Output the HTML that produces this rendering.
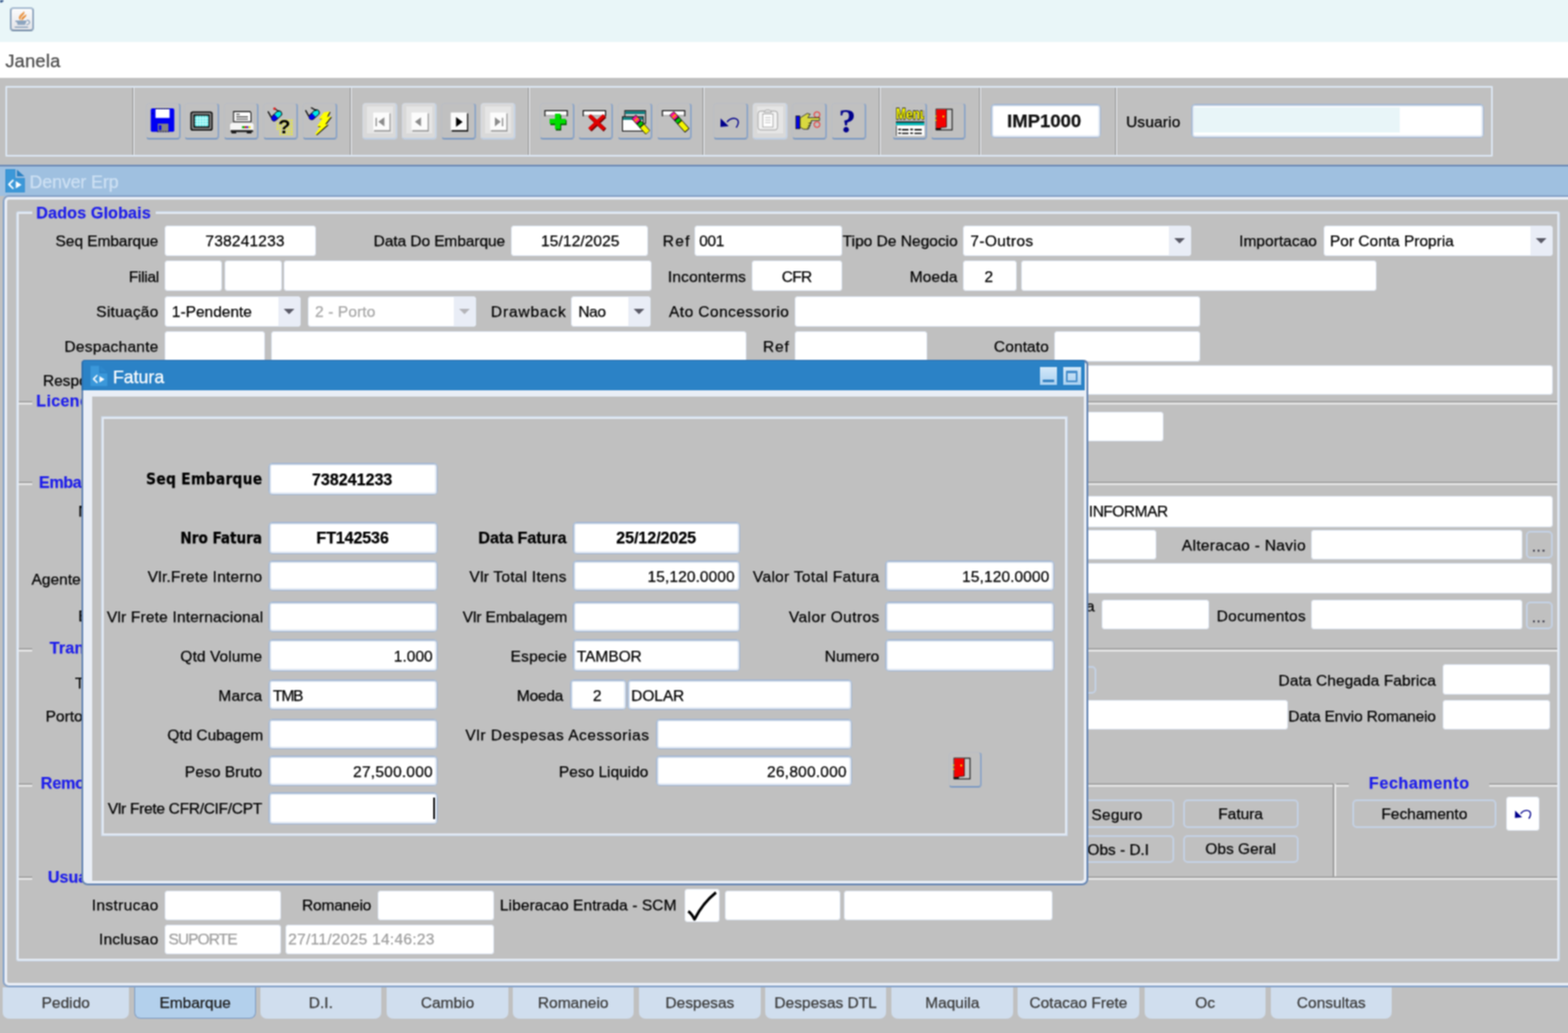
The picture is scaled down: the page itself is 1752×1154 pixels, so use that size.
<!DOCTYPE html>
<html lang="pt-BR"><head><meta charset="utf-8"><title>Denver Erp - Fatura</title>
<style>
*{box-sizing:border-box;margin:0;padding:0}
html{background:#c0c0c0}
body{position:relative;width:1752px;height:1154px;background:#c0c0c0;font-family:"Liberation Sans",sans-serif;font-size:17.3px;color:#000}
#c{left:0;top:0;width:1752px;height:1154px;overflow:hidden}
#b{left:-8px;top:-8px;width:1768px;height:1170px;background:#c0c0c0;filter:url(#soft)}
#w{left:8px;top:8px;width:1752px;height:1154px}
.l,.lb,.t,.tt{-webkit-text-stroke:.25px currentColor}
body div,body span,body i,body svg{position:absolute}
.l{white-space:nowrap;height:22px;line-height:22px}
.lb{white-space:nowrap;height:22px;line-height:22px;font-weight:bold;font-size:18px}
.t{white-space:nowrap;height:22px;line-height:22px;font-weight:bold;font-size:18px;color:#1f1fea}
.tt{white-space:nowrap;height:22px;line-height:22px}
.f{background:#fff;border:1px solid #e1e9f5;border-radius:3px;white-space:nowrap;overflow:hidden}
.ff{background:#fff;border:1px solid #a0b5d2;border-radius:4px;box-shadow:inset 0 1px 0 0 #b6c7dd,inset 1px 0 0 0 #c3d2e5,inset 0 0 0 2px #e3eaf4}
.b{font-weight:bold}
.dis{color:#a8a8a8}
.g{color:#a0a0a0}
.dd{right:0;top:0;bottom:0;width:24px;background:#e9edf6}
.dd i{left:6px;top:13px;width:0;height:0;border-left:6.5px solid transparent;border-right:6.5px solid transparent;border-top:6.5px solid #5a5a66}
.dis .dd i{border-top-color:#b4b4b8}
.hl{background:linear-gradient(#9b9b9b 0 1px,#b8b8b8 1px 2px,#e8e8e8 2px 3px,#e2e2e2 3px 4px)}
.vl{background:linear-gradient(90deg,#9b9b9b 0 1px,#a4a4a4 1px 2px,#e8e8e8 2px 3px,#e4e4e4 3px 4px)}
.btn{border:2px solid #c4d1e4;border-radius:5px;text-align:center;white-space:nowrap}
.tab{top:1103px;height:35px;background:#d0deee;border-radius:0 0 7px 7px}
.tab.sel{background:#b3d0ec;border:solid #7d9cc4;border-width:0 1.5px 1.5px 1.5px;height:35px}
.tb{top:115px;width:39px;height:41px;border-radius:4px;border:solid;border-width:1px 2px 2px 1px;border-color:#b9bdc4 #8fa6c6 #7f9bc2 #b9bdc4}
.tb.off{background:#d9d9d9;border-color:#d3dae4 #c6d3e4 #c0cfe3 #d3dae4}
.tb.off::before{content:"";position:absolute;left:4px;top:3px;right:3px;bottom:5px;background:#e5e5e5}
.tb svg{left:-1px;top:-1px;width:38px;height:40px;overflow:visible}
.sep{top:98px;height:75px;width:2px;border-left:1px solid #8e8e8e;border-right:1px solid #eef2f8}
.dj{font-family:"DejaVu Sans Condensed","DejaVu Sans",sans-serif}

</style></head>
<body>
<svg width="0" height="0" style="position:absolute"><filter id="soft" x="0" y="0" width="100%" height="100%" filterUnits="objectBoundingBox" color-interpolation-filters="sRGB"><feConvolveMatrix order="3" kernelMatrix="1 2 1 2 4 2 1 2 1" divisor="16" bias="0" edgeMode="duplicate" preserveAlpha="true"/></filter></svg>
<div id="c"><div id="b"><div id="w">
<div style="left:-8px;top:-8px;width:1768px;height:55px;background:#e9f6f8"></div>
<div style="left:0;top:0;width:4px;height:3px;background:#4a6a98;border-radius:0 0 4px 0"></div>
<div style="left:11px;top:7.500px;width:27px;height:27px;border:2px solid;border-color:#a9bdd2 #93a9c1 #7d94ad #93a9c1;border-radius:4px;background:linear-gradient(#fcfcfc,#e2e3e7)">
<svg viewBox="285 195 705 710" style="left:-2px;top:-2px;width:27px;height:27px"><path d="M610 590c-110-60-60-150 20-210 40-30 60-50 66-76 40 50 10 100-36 140-50 40-70 90-50 146z" fill="#ea9a4e"/><path d="M650 590c-50-50-10-100 40-130 30-20 60-40 70-60 20 50-10 80-50 110-30 24-50 50-60 80z" fill="#e88a30"/><path d="M460 610h300M505 655h235M520 698h200M440 782h365" fill="none" stroke="#7f9ab8" stroke-width="36" stroke-linecap="round"/><path d="M790 575c70 10 90 60 60 100-16 20-40 30-70 34" fill="none" stroke="#7f9ab8" stroke-width="30" stroke-linecap="round"/></svg></div>
<div style="left:-8px;top:47px;width:1768px;height:40px;background:#fff"></div>
<div class="tt" style="left:5.9px;top:57px;letter-spacing:0.22px;font-size:20.5px;color:#4a4a4a">Janela</div>
<div style="left:5.5px;top:95.5px;width:1662.5px;height:79.5px;border:2px solid #dbe5f1;border-radius:1px"></div>
<div style="left:-8px;top:184px;width:1768px;height:35px;background:#9fc0e0;border-top:2px solid #6f8cb6"></div>
<svg viewBox="165 225 570 690" style="left:6.3px;top:188.6px;width:21.7px;height:26.3px"><path d="M165 245q0-20 20-20H460V480H735V895q0 20-20 20H185q-20 0-20-20z" fill="#2f86c8"/><path d="M178 238H447V493H722V902H178z" fill="#3c98d8"/><path d="M505 235L725 435H505z" fill="#2b80c2"/><path d="M400 540l-130 130 130 130" fill="none" stroke="#fff" stroke-width="52" stroke-linejoin="round" opacity=".92"/><path d="M330 600l-50 70 50 70" fill="none" stroke="#fff" stroke-width="40" opacity=".55"/><path d="M470 575L640 682 470 790z" fill="#fff"/></svg>
<div class="tt" style="left:33.1px;top:192px;letter-spacing:-0.08px;font-size:19.8px;color:#cde0f3">Denver Erp</div>
<div style="left:3px;top:218px;width:1767px;height:885px;border:2px solid #86a2c8;border-radius:7px"><div style="left:0;top:0;right:0;bottom:0;border:3px solid #e8edf5;border-radius:5px"></div></div>
<div style="left:18px;top:236px;width:1725px;height:838px;border:1px solid #cbd9ea;border-radius:2px"><div style="left:0;top:0;right:0;bottom:0;border:2px solid #e2e9f3;border-radius:1px"></div></div>
<div style="left:36px;top:232px;width:138px;height:12px;background:#c0c0c0"></div>
<div class="t" style="left:40.6px;top:227px;letter-spacing:0.15px;font-size:18px;">Dados Globais</div>
<div class="l" style="left:62.1px;top:258px;letter-spacing:-0.05px;">Seq Embarque</div>
<div class="f" style="left:184px;top:252px;width:169px;height:34px;line-height:32px;text-align:left;padding-left:6px;"></div>
<div class="l" style="left:229.6px;top:258px;letter-spacing:0.22px;">738241233</div>
<div class="l" style="left:417.6px;top:258px;letter-spacing:-0.08px;">Data Do Embarque</div>
<div class="f" style="left:571px;top:252px;width:153px;height:34px;line-height:32px;text-align:left;padding-left:6px;"></div>
<div class="l" style="left:604.6px;top:258px;letter-spacing:0.11px;">15/12/2025</div>
<div class="l" style="left:740.6px;top:258px;letter-spacing:1.45px;">Ref</div>
<div class="f" style="left:776px;top:252px;width:165px;height:34px;line-height:32px;text-align:left;padding-left:6px;"></div>
<div class="l" style="left:781.3px;top:258px;letter-spacing:-0.37px;">001</div>
<div class="l" style="left:941.6px;top:258px;letter-spacing:0.03px;">Tipo De Negocio</div>
<div class="f cb" style="left:1076px;top:252px;width:255px;height:34px;"><span class="dd"><i></i></span></div>
<div class="l" style="left:1084.3px;top:258px;letter-spacing:0.41px;">7-Outros</div>
<div class="l" style="left:1384.6px;top:258px;letter-spacing:0.04px;">Importacao</div>
<div class="f cb" style="left:1479px;top:252px;width:256px;height:34px;"><span class="dd"><i></i></span></div>
<div class="l" style="left:1486.1px;top:258px;">Por Conta Propria</div>
<div class="l" style="left:144.1px;top:298px;letter-spacing:-0.35px;">Filial</div>
<div class="f" style="left:184px;top:291px;width:64px;height:34px;line-height:32px;text-align:left;padding-left:6px;"></div>
<div class="f" style="left:251px;top:291px;width:64px;height:34px;line-height:32px;text-align:left;padding-left:6px;"></div>
<div class="f" style="left:317px;top:291px;width:411px;height:34px;line-height:32px;text-align:left;padding-left:6px;"></div>
<div class="l" style="left:746.3px;top:298px;letter-spacing:0.18px;">Inconterms</div>
<div class="f" style="left:840px;top:291px;width:101px;height:34px;line-height:32px;text-align:left;padding-left:6px;"></div>
<div class="l" style="left:873.6px;top:298px;letter-spacing:-0.87px;">CFR</div>
<div class="l" style="left:1016.6px;top:298px;letter-spacing:0.11px;">Moeda</div>
<div class="f" style="left:1076px;top:291px;width:60px;height:34px;line-height:32px;text-align:left;padding-left:6px;"></div>
<div class="l" style="left:1100.1px;top:298px;">2</div>
<div class="f" style="left:1141px;top:291px;width:397px;height:34px;line-height:32px;text-align:left;padding-left:6px;"></div>
<div class="l" style="left:107.6px;top:337px;letter-spacing:0.29px;">Situação</div>
<div class="f cb" style="left:184px;top:331px;width:152px;height:34px;"><span class="dd"><i></i></span></div>
<div class="l" style="left:192.1px;top:337px;">1-Pendente</div>
<div class="f cb dis" style="left:344px;top:331px;width:188px;height:34px;"><span class="dd"><i></i></span></div>
<div class="l dis" style="left:352.1px;top:337px;letter-spacing:0.13px;">2 - Porto</div>
<div class="l" style="left:548.6px;top:337px;letter-spacing:0.95px;">Drawback</div>
<div class="f cb" style="left:638px;top:331px;width:89px;height:34px;"><span class="dd"><i></i></span></div>
<div class="l" style="left:646.3px;top:337px;letter-spacing:-0.45px;">Nao</div>
<div class="l" style="left:747.6px;top:337px;letter-spacing:0.50px;">Ato Concessorio</div>
<div class="f" style="left:888px;top:331px;width:453px;height:34px;line-height:32px;text-align:left;padding-left:6px;"></div>
<div class="l" style="left:72.1px;top:376px;letter-spacing:0.30px;">Despachante</div>
<div class="f" style="left:184px;top:370px;width:112px;height:34px;line-height:32px;text-align:left;padding-left:6px;"></div>
<div class="f" style="left:303px;top:370px;width:531px;height:34px;line-height:32px;text-align:left;padding-left:6px;"></div>
<div class="l" style="left:852.6px;top:376px;letter-spacing:0.95px;">Ref</div>
<div class="f" style="left:888px;top:370px;width:148px;height:34px;line-height:32px;text-align:left;padding-left:6px;"></div>
<div class="l" style="left:1110.6px;top:376px;letter-spacing:0.13px;">Contato</div>
<div class="f" style="left:1178px;top:370px;width:163px;height:34px;line-height:32px;text-align:left;padding-left:6px;"></div>
<div class="l" style="left:48px;top:414px;">Responsavel</div>
<div class="f" style="left:184px;top:408px;width:1551px;height:33px;line-height:31px;text-align:left;padding-left:6px;"></div>
<div class="hl" style="left:21px;top:448px;width:1719px;height:4px;"></div>
<div style="left:36px;top:442px;width:140px;height:12px;background:#c0c0c0"></div>
<div class="t" style="left:40.6px;top:437px;letter-spacing:0.31px;font-size:18px;">Licenciamento</div>
<div class="f" style="left:1100px;top:460px;width:200px;height:33px;line-height:31px;text-align:left;padding-left:6px;"></div>
<div class="hl" style="left:21px;top:538px;width:1719px;height:4px;"></div>
<div style="left:36px;top:533px;width:98px;height:12px;background:#c0c0c0"></div>
<div class="t" style="left:43.6px;top:528px;letter-spacing:-0.46px;font-size:18px;">Embarque</div>
<div class="l" style="left:87.5px;top:560px;">Navio</div>
<div class="f" style="left:184px;top:554px;width:1551px;height:35px;line-height:33px;text-align:left;padding-left:6px;"></div>
<div class="l" style="left:1216.6px;top:560px;letter-spacing:-0.52px;">INFORMAR</div>
<div class="f" style="left:1100px;top:592px;width:192px;height:33px;line-height:31px;text-align:left;padding-left:6px;"></div>
<div class="l" style="left:1320.6px;top:598px;letter-spacing:0.36px;">Alteracao - Navio</div>
<div class="f" style="left:1465px;top:592px;width:236px;height:33px;line-height:31px;text-align:left;padding-left:6px;"></div>
<div class="btn" style="left:1704.5px;top:592.5px;width:30px;height:31px;"></div>
<div class="l" style="left:1704.500px;width:30px;top:599px;text-align:center;color:#334;letter-spacing:.6px">...</div>
<div class="l" style="left:35.3px;top:636px;">Agente</div>
<div class="f" style="left:184px;top:629px;width:1550px;height:34px;line-height:32px;text-align:left;padding-left:6px;"></div>
<div class="l" style="left:87.4px;top:677px;">Embarcacao</div>
<div class="l" style="right:529px;top:666px;">Data</div>
<div class="f" style="left:1231px;top:670px;width:120px;height:33px;line-height:31px;text-align:left;padding-left:6px;"></div>
<div class="l" style="left:1359.6px;top:677px;letter-spacing:0.25px;">Documentos</div>
<div class="f" style="left:1465px;top:670px;width:236px;height:33px;line-height:31px;text-align:left;padding-left:6px;"></div>
<div class="btn" style="left:1704.5px;top:671.5px;width:30px;height:31px;"></div>
<div class="l" style="left:1704.500px;width:30px;top:678px;text-align:center;color:#334;letter-spacing:.6px">...</div>
<div class="hl" style="left:21px;top:724px;width:1719px;height:4px;"></div>
<div style="left:36px;top:718px;width:120px;height:12px;background:#c0c0c0"></div>
<div class="t" style="left:55.6px;top:713px;letter-spacing:0.20px;font-size:18px;">Transporte</div>
<div class="l" style="left:83.8px;top:752px;">Tipo</div>
<div class="btn" style="left:1100px;top:743.5px;width:125px;height:31px;"></div>
<div class="l" style="left:1428.6px;top:749px;letter-spacing:0.10px;">Data Chegada Fabrica</div>
<div class="f" style="left:1612px;top:742px;width:120px;height:34px;line-height:32px;text-align:left;padding-left:6px;"></div>
<div class="l" style="left:51px;top:789px;">Porto</div>
<div class="f" style="left:184px;top:782px;width:1255px;height:33px;line-height:31px;text-align:left;padding-left:6px;"></div>
<div class="l" style="left:1439.6px;top:789px;letter-spacing:-0.18px;">Data Envio Romaneio</div>
<div class="f" style="left:1612px;top:782px;width:120px;height:33px;line-height:31px;text-align:left;padding-left:6px;"></div>
<div class="hl" style="left:21px;top:875px;width:1469px;height:4px;"></div>
<div style="left:36px;top:869px;width:95px;height:12px;background:#c0c0c0"></div>
<div class="t" style="left:45.6px;top:864px;letter-spacing:-0.21px;font-size:18px;">Remocao</div>
<div class="vl" style="left:1489px;top:876px;width:4px;height:105px;"></div>
<div class="hl" style="left:1493px;top:875px;width:247px;height:4px;"></div>
<div style="left:1506.5px;top:869px;width:157.5px;height:12px;background:#c0c0c0"></div>
<div class="t" style="left:1529.6px;top:864px;letter-spacing:0.64px;font-size:18px;">Fechamento</div>
<div class="btn" style="left:1184px;top:893px;width:128px;height:31.5px;"></div>
<div class="l" style="left:1219.6px;top:898.5px;letter-spacing:0.21px;">Seguro</div>
<div class="btn" style="left:1322px;top:893px;width:128.5px;height:31.5px;"></div>
<div class="l" style="left:1322px;width:128.5px;top:897.75px;text-align:center">Fatura</div>
<div class="btn" style="left:1184px;top:932.5px;width:128px;height:31.5px;"></div>
<div class="l" style="left:1215.1px;top:938px;letter-spacing:-0.04px;">Obs - D.I</div>
<div class="btn" style="left:1322px;top:932.5px;width:128.5px;height:31.5px;"></div>
<div class="l" style="left:1322px;width:128.5px;top:937.25px;text-align:center">Obs Geral</div>
<div class="btn" style="left:1511px;top:893px;width:161px;height:31.5px;"></div>
<div class="l" style="left:1511px;width:161px;top:897.75px;text-align:center">Fechamento</div>
<div style="left:1683px;top:890px;width:37px;height:38px;background:#fff;border-radius:3px;border:1px solid #e6edf7"><svg viewBox="100 170 190 130" style="left:7px;top:11px;width:22px;height:15px"><path d="M116 200l68 66-70 6z" fill="#00008c"/><path d="M170 232c30-44 100-44 96 6-2 16-8 28-18 40" fill="none" stroke="#00008c" stroke-width="12"/></svg></div>
<div class="hl" style="left:21px;top:979px;width:1719px;height:4px;"></div>
<div style="left:36px;top:974px;width:90px;height:12px;background:#c0c0c0"></div>
<div class="t" style="left:53.6px;top:969px;letter-spacing:-0.04px;font-size:18px;">Usuario</div>
<div class="l" style="left:102.6px;top:1000px;letter-spacing:0.40px;">Instrucao</div>
<div class="f" style="left:184px;top:995px;width:130px;height:33px;line-height:31px;text-align:left;padding-left:6px;"></div>
<div class="l" style="left:337.6px;top:1000px;letter-spacing:-0.21px;">Romaneio</div>
<div class="f" style="left:422px;top:995px;width:130px;height:33px;line-height:31px;text-align:left;padding-left:6px;"></div>
<div class="l" style="left:558.6px;top:1000px;letter-spacing:0.10px;">Liberacao Entrada - SCM</div>
<div style="left:765px;top:993px;width:39px;height:37px;background:#fff;border-radius:3px;border:1px solid #e6edf7"><svg viewBox="0 0 39 37" style="left:0;top:0;width:39px;height:37px"><path d="M3 24c3 2 5 5 7 9 6-12 14-22 24-30" fill="none" stroke="#000" stroke-width="3" stroke-linejoin="round"/></svg></div>
<div class="f" style="left:810px;top:995px;width:129px;height:33px;line-height:31px;text-align:left;padding-left:6px;"></div>
<div class="f" style="left:943px;top:995px;width:233px;height:33px;line-height:31px;text-align:left;padding-left:6px;"></div>
<div class="l" style="left:110.6px;top:1038px;letter-spacing:0.27px;">Inclusao</div>
<div class="f" style="left:184px;top:1033px;width:130px;height:33px;line-height:31px;text-align:left;padding-left:6px;"></div>
<div class="l g" style="left:188.3px;top:1038px;letter-spacing:-1.02px;">SUPORTE</div>
<div class="f" style="left:319px;top:1033px;width:233px;height:33px;line-height:31px;text-align:left;padding-left:6px;"></div>
<div class="l g" style="left:322.1px;top:1038px;letter-spacing:0.33px;">27/11/2025 14:46:23</div>
<div class="sep" style="left:148px"></div>
<div class="sep" style="left:391px"></div>
<div class="sep" style="left:590px"></div>
<div class="sep" style="left:785px"></div>
<div class="sep" style="left:982px"></div>
<div class="sep" style="left:1094px"></div>
<div class="sep" style="left:1246px"></div>
<div class="tb" style="left:163px"><svg viewBox="0 0 38 40"><g transform="translate(-7.00 -9.00) scale(0.13128)">
<rect x="95" y="115" width="200" height="200" rx="14" fill="#0000f5"/>
<rect x="135" y="122" width="120" height="74" fill="#fff"/>
<path d="M138 118h114" stroke="#111" stroke-width="7" stroke-dasharray="14 8"/>
<rect x="155" y="245" width="90" height="68" fill="#858585"/>
<rect x="165" y="258" width="20" height="42" fill="#0000f5"/>
<path d="M150 312h100" stroke="#111" stroke-width="7" stroke-dasharray="14 8"/>
<rect x="106" y="152" width="10" height="12" fill="#00008a"/>
</g></svg></div>
<div class="tb" style="left:206px"><svg viewBox="0 0 38 40"><g transform="translate(-50.00 -9.00) scale(0.13128)">
<rect x="432" y="140" width="190" height="165" rx="20" fill="#111"/>
<rect x="444" y="152" width="166" height="141" rx="12" fill="#8a8a8a"/>
<rect x="458" y="166" width="138" height="113" rx="4" fill="#111"/>
<rect x="470" y="178" width="116" height="90" fill="#5fe6e6"/>
<path d="M470 200h116M470 223h116M470 246h116M493 178v90M516 178v90M540 178v90M563 178v90" stroke="#d8ffff" stroke-width="7"/>
</g></svg></div>
<div class="tb" style="left:250px"><svg viewBox="0 0 38 40"><g transform="translate(-94.00 -9.00) scale(0.13128)">
<path d="M800 142h140l8 12v75H800z" fill="#fff" stroke="#111" stroke-width="8"/>
<path d="M822 166h30M822 186h100M822 206h100" stroke="#111" stroke-width="7"/>
<rect x="770" y="238" width="200" height="66" rx="6" fill="#f6f6f6"/>
<path d="M770 248c0-8 6-12 14-12M970 248c0-8-6-12-14-12" stroke="#999" stroke-width="5" fill="none"/>
<rect x="775" y="300" width="190" height="16" fill="#111"/>
<rect x="782" y="314" width="40" height="14" fill="#111"/><rect x="912" y="314" width="40" height="14" fill="#111"/>
<rect x="872" y="266" width="22" height="18" fill="#00b000"/><rect x="894" y="266" width="16" height="18" fill="#e00000"/><rect x="910" y="266" width="16" height="18" fill="#2020e0"/><rect x="926" y="266" width="18" height="18" fill="#e8e000"/>
</g></svg></div>
<div class="tb" style="left:294px"><svg viewBox="0 0 38 40"><g transform="translate(-139.00 -9.00) scale(0.13128)"><g transform="translate(1172 180) rotate(-43)"><rect x="-52" y="-27" width="108" height="54" rx="26" fill="#111"/><path d="M-26 -21h28v42h-28a21 21 0 0 1 0-42z" fill="#0000f0" transform="translate(-3 0)"/><path d="M-2 -21h34l16 9v24l-16 9h-34z" fill="#00e8e8"/></g><path d="M1102 144l24 44" stroke="#111" stroke-width="11" stroke-linecap="round"/><path d="M1160 118l34 24" stroke="#111" stroke-width="9"/><circle cx="1156" cy="118" r="11" fill="#e02020"/>
<defs><pattern id="yd" x="1170" y="205" width="24" height="24" patternUnits="userSpaceOnUse"><rect x="3" y="3" width="16" height="16" rx="6" fill="#ecec30"/></pattern></defs>
<path d="M1170 232h30v-27h115v142h-120v-44h-25z" fill="url(#yd)"/>
<text x="1238" y="327" font-family="Liberation Sans,sans-serif" font-weight="bold" font-size="172" text-anchor="middle" fill="#000">?</text>
</g></svg></div>
<div class="tb" style="left:338px"><svg viewBox="0 0 38 40"><g transform="translate(-182.00 -9.00) scale(0.13128)"><g transform="translate(1484 170) rotate(-43)"><rect x="-52" y="-27" width="108" height="54" rx="26" fill="#111"/><path d="M-26 -21h28v42h-28a21 21 0 0 1 0-42z" fill="#0000f0" transform="translate(-3 0)"/><path d="M-2 -21h34l16 9v24l-16 9h-34z" fill="#00e8e8"/></g><path d="M1414 134l24 44" stroke="#111" stroke-width="11" stroke-linecap="round"/><path d="M1462 110l40 22" stroke="#111" stroke-width="10" stroke-linecap="round"/>
<path d="M1568 148L1619 140 1596 187 1631 183 1580 250 1604 250 1502 340 1494 332 1541 269 1510 269 1553 203 1525 203Z" fill="#111" transform="translate(7 5)"/>
<path d="M1568 148L1619 140 1596 187 1631 183 1580 250 1604 250 1502 340 1494 332 1541 269 1510 269 1553 203 1525 203Z" fill="#ffff00"/>
</g></svg></div>
<div class="tb off" style="left:405px"><svg viewBox="0 0 38 40"><g transform="translate(-7.00 -9.00) scale(0.13128)"><rect x="153" y="158" width="140" height="155" fill="#9a9a9a"/><rect x="145" y="150" width="138" height="150" fill="#fcfcfc"/><rect x="165" y="195" width="11" height="72" fill="#8c8c8c"/><path d="M240 190v78l-52-39z" fill="#8c8c8c"/></g></svg></div>
<div class="tb off" style="left:449px"><svg viewBox="0 0 38 40"><g transform="translate(-51.00 -9.00) scale(0.13128)"><rect x="478" y="158" width="140" height="155" fill="#9a9a9a"/><rect x="470" y="150" width="138" height="150" fill="#fcfcfc"/><path d="M552 190v78l-52-39z" fill="#8c8c8c"/></g></svg></div>
<div class="tb" style="left:493px"><svg viewBox="0 0 38 40"><g transform="translate(-95.00 -9.00) scale(0.13128)"><rect x="813" y="158" width="140" height="155" fill="#111"/><rect x="805" y="150" width="138" height="150" fill="#fcfcfc"/><path d="M850 188v84l56-42z" fill="#000"/></g></svg></div>
<div class="tb off" style="left:537px"><svg viewBox="0 0 38 40"><g transform="translate(-139.00 -9.00) scale(0.13128)"><rect x="1148" y="158" width="140" height="155" fill="#9a9a9a"/><rect x="1140" y="150" width="138" height="150" fill="#fcfcfc"/><path d="M1180 190v78l50-39z" fill="#8c8c8c"/><rect x="1240" y="195" width="11" height="72" fill="#8c8c8c"/></g></svg></div>
<div class="tb" style="left:603px"><svg viewBox="0 0 38 40"><g transform="translate(-7.00 -9.00) scale(0.13128)"><rect x="98" y="134" width="190" height="44" fill="#fff" stroke="#111" stroke-width="9"/><rect x="102" y="176" width="182" height="8" fill="#c0c0c0"/>
<path d="M184 164h46v44h46v42h-46v46h-46v-46h-46v-42h46z" fill="#005000" transform="translate(7 7)"/>
<path d="M184 160h46v44h46v42h-46v46h-46v-46h-46v-42h46z" fill="#00dc00"/>
</g></svg></div>
<div class="tb" style="left:646px"><svg viewBox="0 0 38 40"><g transform="translate(-50.00 -9.00) scale(0.13128)"><rect x="424" y="134" width="190" height="44" fill="#fff" stroke="#111" stroke-width="9"/><rect x="428" y="176" width="182" height="8" fill="#c0c0c0"/>
<path d="M478 176l126 118M604 176l-126 118" stroke="#700000" stroke-width="34" transform="translate(5 5)"/>
<path d="M476 174l126 118M602 174l-126 118" stroke="#e00000" stroke-width="30"/>
</g></svg></div>
<div class="tb" style="left:690px"><svg viewBox="0 0 38 40"><g transform="translate(-94.00 -9.00) scale(0.13128)">
<rect x="778" y="134" width="176" height="110" fill="#c8c8c8" stroke="#111" stroke-width="8"/><rect x="782" y="140" width="168" height="22" fill="#007878"/>
<rect x="758" y="186" width="176" height="122" fill="#fff" stroke="#111" stroke-width="8"/><rect x="762" y="192" width="168" height="20" fill="#007878"/>
<g transform="translate(858 190) rotate(48)"><rect x="-6" y="-26" width="181" height="52" rx="6" fill="#111"/><rect x="-2" y="-21" width="56" height="42" fill="#ff10a0"/><rect x="20" y="-21" width="16" height="42" fill="#ff9000"/><rect x="54" y="-21" width="10" height="42" fill="#111"/><rect x="64" y="-21" width="30" height="42" fill="#00c800"/><rect x="94" y="-21" width="8" height="42" fill="#111"/><rect x="102" y="-21" width="70" height="42" fill="#f4f400"/></g></g></svg></div>
<div class="tb" style="left:734px"><svg viewBox="0 0 38 40"><g transform="translate(-138.00 -9.00) scale(0.13128)"><rect x="1098" y="134" width="190" height="44" fill="#fff" stroke="#111" stroke-width="9"/><rect x="1102" y="176" width="182" height="8" fill="#c0c0c0"/><g transform="translate(1180 160) rotate(48)"><rect x="-6" y="-26" width="200" height="52" rx="6" fill="#111"/><rect x="-2" y="-21" width="56" height="42" fill="#ff10a0"/><rect x="20" y="-21" width="16" height="42" fill="#ff9000"/><rect x="54" y="-21" width="10" height="42" fill="#111"/><rect x="64" y="-21" width="30" height="42" fill="#00c800"/><rect x="94" y="-21" width="8" height="42" fill="#111"/><rect x="102" y="-21" width="85" height="42" fill="#f4f400"/></g></g></svg></div>
<div class="tb" style="left:797px"><svg viewBox="0 0 38 40"><g transform="translate(-7.00 -9.00) scale(0.13128)">
<path d="M116 200l68 66-70 6z" fill="#00008c"/>
<path d="M170 232c30-44 100-44 96 6-2 16-8 28-18 40" fill="none" stroke="#00008c" stroke-width="11"/>
</g></svg></div>
<div class="tb off" style="left:841px"><svg viewBox="0 0 38 40"><g transform="translate(-51.00 -9.00) scale(0.13128)">
<rect x="434" y="138" width="166" height="160" rx="22" fill="#f2f2f2" stroke="#9c9c9c" stroke-width="7"/>
<path d="M486 150c0-30 62-30 62 0z" fill="#e6e6e6" stroke="#9c9c9c" stroke-width="6"/>
<rect x="474" y="162" width="88" height="112" fill="#fff" stroke="#9c9c9c" stroke-width="6"/>
<path d="M494 192h48M494 214h48M494 236h48" stroke="#b0b0b0" stroke-width="6"/>
</g></svg></div>
<div class="tb" style="left:885px"><svg viewBox="0 0 38 40"><g transform="translate(-95.00 -9.00) scale(0.13128)">
<circle cx="936" cy="168" r="24" fill="none" stroke="#f03030" stroke-width="8"/><circle cx="936" cy="252" r="24" fill="none" stroke="#f03030" stroke-width="8"/>
<rect x="756" y="180" width="34" height="108" fill="#0000f0" stroke="#111" stroke-width="6"/>
<path d="M792 196l60-38 26 6-20 30h100v24h-70v16h-8v20h-8v20h-10v18h-40l-30-16z" fill="#d8d840" stroke="#222" stroke-width="6" stroke-linejoin="round"/>
<path d="M862 240h28M858 262h24M852 282h22" stroke="#222" stroke-width="5"/>
</g></svg></div>
<div class="tb" style="left:929px"><svg viewBox="0 0 38 40"><g transform="translate(-139.00 -9.00) scale(0.13128)">
<text x="1193" y="318" font-family="Liberation Serif,serif" font-weight="bold" font-size="295" text-anchor="middle" fill="#00008c">?</text>
</g></svg></div>
<div class="tb" style="left:997px"><svg viewBox="0 0 38 40"><g transform="translate(-17.00 -9.00) scale(0.13128)">
<defs><clipPath id="mc"><rect x="150" y="90" width="252" height="260"/></clipPath></defs>
<g clip-path="url(#mc)">
<text transform="translate(160 204) scale(0.8 1)" font-family="Liberation Sans,sans-serif" font-weight="bold" font-size="128" fill="#f4f400" stroke="#111" stroke-width="10" paint-order="stroke">Menu</text>
<rect x="160" y="226" width="250" height="10" fill="#111"/>
<rect x="160" y="236" width="250" height="22" fill="#00b8b8"/>
<rect x="160" y="262" width="250" height="86" fill="#fff"/>
<rect x="160" y="262" width="8" height="86" fill="#555"/>
<path d="M180 294h24M212 296h56M282 294h24M318 296h62M180 326h24M212 328h56M282 326h24M318 328h62" stroke="#111" stroke-width="12"/>
</g>
</g></svg></div>
<div class="tb" style="left:1040px"><svg viewBox="0 0 38 40"><g transform="translate(-60.00 -9.00) scale(0.13128)">
<rect x="503" y="122" width="136" height="176" fill="#c8c8c8" stroke="#111" stroke-width="8"/>
<path d="M505 124h86v150l-48 4-6 16h-32z" fill="#f40000"/>
<path d="M591 124v150l-48 4-6 16" fill="none" stroke="#111" stroke-width="5"/>
<path d="M500 290h44" stroke="#111" stroke-width="14"/>
<rect x="556" y="176" width="16" height="16" fill="#f4c000"/>
<path d="M492 182h14M492 216h14" stroke="#f4e000" stroke-width="8"/>
</g></svg></div>
<div class="ff" style="left:1107px;top:116px;width:123px;height:38px;line-height:36px;text-align:left;padding-left:6px;"></div>
<div class="l b" style="left:1125.3px;top:124px;letter-spacing:-0.06px;font-size:20.8px;color:#111">IMP1000</div>
<div class="l" style="left:1258.2px;top:125px;letter-spacing:0.19px;">Usuario</div>
<div class="ff" style="left:1331px;top:116px;width:327px;height:38px;line-height:36px;text-align:left;padding-left:6px;"></div>
<div style="left:1334px;top:120px;width:230px;height:28px;background:#e8f5f8"></div>
<div style="left:91px;top:402px;width:1125px;height:587px;background:#6585b2;border-radius:4px 5px 7px 7px;overflow:hidden"><div style="left:2px;top:3px;right:2px;bottom:2.500px;background:#e9eef6;border-radius:0 3px 5px 5px"></div><div style="left:0;top:0;right:4px;height:34px;background:#2b82c6;border:solid #2f70ae;border-width:1.500px 0 0 2px;border-radius:4px 3px 0 0"></div><div style="left:12px;top:41px;right:5.500px;bottom:5.500px;background:#c0c0c0;border-radius:0 0 3px 0"></div></div>
<svg viewBox="165 225 570 690" style="left:101px;top:408px;width:19px;height:24px"><path d="M165 245q0-20 20-20H460V480H735V895q0 20-20 20H185q-20 0-20-20z" fill="#3690d2"/><path d="M178 238H447V493H722V902H178z" fill="#3b98da"/><path d="M505 235L725 435H505z" fill="#2f88cc"/><path d="M400 540l-130 130 130 130" fill="none" stroke="#fff" stroke-width="52" stroke-linejoin="round" opacity=".92"/><path d="M330 600l-50 70 50 70" fill="none" stroke="#fff" stroke-width="40" opacity=".55"/><path d="M470 575L640 682 470 790z" fill="#fff"/></svg>
<div class="tt" style="left:126.3px;top:410px;letter-spacing:-0.01px;font-size:19.8px;color:#fff">Fatura</div>
<div style="left:1161.5px;top:410px;width:19.5px;height:20px;background:linear-gradient(#d3e8f8,#a9d0f0)"><div style="left:3.500px;right:3px;bottom:3.500px;height:3px;background:#3b86c4;border-radius:1px"></div></div>
<div style="left:1187.5px;top:410px;width:20px;height:20px;background:linear-gradient(#d3e8f8,#a9d0f0)"><div style="left:3.500px;right:3.500px;top:3.500px;bottom:3.500px;border:2px solid #4a90cc;border-top-width:3px;border-radius:1px"></div></div>
<div style="left:113px;top:465px;width:1080px;height:469px;border:1px solid #cbd9ea"><div style="left:0;top:0;right:0;bottom:0;border:2px solid #e2e9f3"></div></div>
<div class="l b dj" style="left:163.3px;top:524px;letter-spacing:0.41px;font-size:17px">Seq Embarque</div>
<div class="ff" style="left:300px;top:517px;width:188.5px;height:36px"></div>
<div class="l b" style="left:348.6px;top:524.5px;letter-spacing:-0.04px;font-size:18px">738241233</div>
<div class="l b dj" style="left:201.6px;top:590px;letter-spacing:-0.08px;font-size:17px">Nro Fatura</div>
<div class="ff" style="left:300px;top:583px;width:188.5px;height:36px"></div>
<div class="l b" style="left:353.6px;top:590px;letter-spacing:-0.18px;font-size:18px">FT142536</div>
<div class="l b" style="left:534.6px;top:590px;letter-spacing:-0.07px;font-size:18px">Data Fatura</div>
<div class="ff" style="left:640px;top:583px;width:186.5px;height:36px"></div>
<div class="l b" style="left:688.6px;top:590px;letter-spacing:-0.09px;font-size:18px">25/12/2025</div>
<div class="l" style="left:165.1px;top:633px;letter-spacing:0.24px;">Vlr.Frete Interno</div>
<div class="ff" style="left:300px;top:626px;width:188.5px;height:34px"></div>
<div class="l" style="left:524.6px;top:633px;letter-spacing:0.28px;">Vlr Total Itens</div>
<div class="ff" style="left:640px;top:626px;width:186.5px;height:34px"></div>
<div class="l" style="left:723.6px;top:632.5px;letter-spacing:0.12px;">15,120.0000</div>
<div class="l" style="left:841.3px;top:633px;letter-spacing:0.37px;">Valor Total Fatura</div>
<div class="ff" style="left:989px;top:626px;width:188.5px;height:34px"></div>
<div class="l" style="left:1075.1px;top:632.5px;letter-spacing:0.12px;">15,120.0000</div>
<div class="l" style="left:119.6px;top:678px;letter-spacing:0.20px;">Vlr Frete Internacional</div>
<div class="ff" style="left:300px;top:672px;width:188.5px;height:34px"></div>
<div class="l" style="left:517.1px;top:678px;letter-spacing:-0.11px;">Vlr Embalagem</div>
<div class="ff" style="left:640px;top:672px;width:186.5px;height:34px"></div>
<div class="l" style="left:881.6px;top:678px;letter-spacing:0.46px;">Valor Outros</div>
<div class="ff" style="left:989px;top:672px;width:188.5px;height:34px"></div>
<div class="l" style="left:201.6px;top:722px;letter-spacing:0.11px;">Qtd Volume</div>
<div class="ff" style="left:300px;top:714px;width:188.5px;height:36px"></div>
<div class="l" style="left:440.1px;top:722px;letter-spacing:0.01px;">1.000</div>
<div class="l" style="left:570.6px;top:722px;letter-spacing:0.22px;">Especie</div>
<div class="ff" style="left:640px;top:714px;width:186.5px;height:36px"></div>
<div class="l" style="left:644.6px;top:722px;letter-spacing:-0.03px;">TAMBOR</div>
<div class="l" style="left:921.6px;top:722px;letter-spacing:-0.13px;">Numero</div>
<div class="ff" style="left:989px;top:714px;width:188.5px;height:36px"></div>
<div class="l" style="left:244.1px;top:766px;letter-spacing:0.20px;">Marca</div>
<div class="ff" style="left:300px;top:759px;width:188.5px;height:34px"></div>
<div class="l" style="left:305.1px;top:765.5px;letter-spacing:-1.24px;">TMB</div>
<div class="l" style="left:577.6px;top:766px;letter-spacing:-0.26px;">Moeda</div>
<div class="ff" style="left:636.5px;top:759px;width:63px;height:34px"></div>
<div class="l" style="left:662.4px;top:765.5px;">2</div>
<div class="ff" style="left:701px;top:759px;width:250.5px;height:34px"></div>
<div class="l" style="left:705.3px;top:765.5px;letter-spacing:-0.06px;">DOLAR</div>
<div class="l" style="left:187.1px;top:810px;letter-spacing:-0.06px;">Qtd Cubagem</div>
<div class="ff" style="left:300px;top:803px;width:188.5px;height:34px"></div>
<div class="l" style="left:520.1px;top:810px;letter-spacing:0.63px;">Vlr Despesas Acessorias</div>
<div class="ff" style="left:732.5px;top:803px;width:219px;height:34px"></div>
<div class="l" style="left:206.6px;top:851px;letter-spacing:0.09px;">Peso Bruto</div>
<div class="ff" style="left:300px;top:844px;width:188.5px;height:34px"></div>
<div class="l" style="left:394.6px;top:850.5px;letter-spacing:0.26px;">27,500.000</div>
<div class="l" style="left:624.6px;top:851px;letter-spacing:-0.01px;">Peso Liquido</div>
<div class="ff" style="left:732.5px;top:844px;width:219px;height:34px"></div>
<div class="l" style="left:857.1px;top:850.5px;letter-spacing:0.26px;">26,800.000</div>
<div class="l" style="left:120.6px;top:892px;letter-spacing:-0.31px;">Vlr Frete CFR/CIF/CPT</div>
<div class="ff" style="left:300px;top:885px;width:188.5px;height:36px"></div>
<div style="left:484px;top:891px;width:2px;height:24px;background:#111"></div>
<div class="tb" style="left:1060px;top:840px;width:37px;height:40px"><svg viewBox="0 0 38 40"><g transform="translate(-60.00 -9.00) scale(0.13128)">
<rect x="503" y="122" width="136" height="176" fill="#c8c8c8" stroke="#111" stroke-width="8"/>
<path d="M505 124h86v150l-48 4-6 16h-32z" fill="#f40000"/>
<path d="M591 124v150l-48 4-6 16" fill="none" stroke="#111" stroke-width="5"/>
<path d="M500 290h44" stroke="#111" stroke-width="14"/>
<rect x="556" y="176" width="16" height="16" fill="#f4c000"/>
<path d="M492 182h14M492 216h14" stroke="#f4e000" stroke-width="8"/>
</g></svg></div>
<div class="tab" style="left:3px;width:141px"></div>
<div class="l" style="left:3px;width:141px;top:1108.500px;text-align:center;color:#3a3a3a">Pedido</div>
<div class="tab sel" style="left:150px;width:136px"></div>
<div class="l" style="left:150px;width:136px;top:1108.500px;text-align:center;color:#1a1a1a">Embarque</div>
<div class="tab" style="left:291px;width:135px"></div>
<div class="l" style="left:291px;width:135px;top:1108.500px;text-align:center;color:#3a3a3a">D.I.</div>
<div class="tab" style="left:432px;width:136px"></div>
<div class="l" style="left:432px;width:136px;top:1108.500px;text-align:center;color:#3a3a3a">Cambio</div>
<div class="tab" style="left:573px;width:135px"></div>
<div class="l" style="left:573px;width:135px;top:1108.500px;text-align:center;color:#3a3a3a">Romaneio</div>
<div class="tab" style="left:714px;width:136px"></div>
<div class="l" style="left:714px;width:136px;top:1108.500px;text-align:center;color:#3a3a3a">Despesas</div>
<div class="tab" style="left:855px;width:135px"></div>
<div class="l" style="left:855px;width:135px;top:1108.500px;text-align:center;color:#3a3a3a">Despesas DTL</div>
<div class="tab" style="left:996px;width:136px"></div>
<div class="l" style="left:996px;width:136px;top:1108.500px;text-align:center;color:#3a3a3a">Maquila</div>
<div class="tab" style="left:1137px;width:136px"></div>
<div class="l" style="left:1137px;width:136px;top:1108.500px;text-align:center;color:#3a3a3a">Cotacao Frete</div>
<div class="tab" style="left:1279px;width:135px"></div>
<div class="l" style="left:1279px;width:135px;top:1108.500px;text-align:center;color:#3a3a3a">Oc</div>
<div class="tab" style="left:1420px;width:135px"></div>
<div class="l" style="left:1420px;width:135px;top:1108.500px;text-align:center;color:#3a3a3a">Consultas</div>
</div></div></div>
</body></html>
